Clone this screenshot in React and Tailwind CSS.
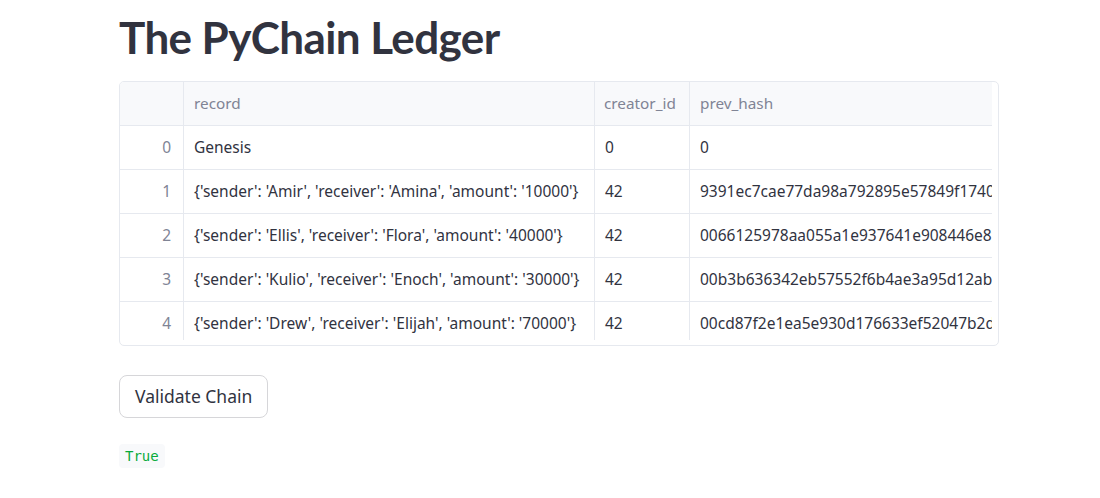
import React from "react";

const rows = [
  {
    record: "Genesis",
    creator: "0",
    hash: "0",
  },
  {
    record: "{'sender': 'Amir', 'receiver': 'Amina', 'amount': '10000'}",
    creator: "42",
    hash: "9391ec7cae77da98a792895e57849f1740a",
  },
  {
    record: "{'sender': 'Ellis', 'receiver': 'Flora', 'amount': '40000'}",
    creator: "42",
    hash: "0066125978aa055a1e937641e908446e89c",
  },
  {
    record: "{'sender': 'Kulio', 'receiver': 'Enoch', 'amount': '30000'}",
    creator: "42",
    hash: "00b3b636342eb57552f6b4ae3a95d12abc9",
  },
  {
    record: "{'sender': 'Drew', 'receiver': 'Elijah', 'amount': '70000'}",
    creator: "42",
    hash: "00cd87f2e1ea5e930d176633ef52047b2d9",
  },
];

const App = () => {
  return (
    <div
      className="bg-white text-[#31333f] w-[1100px] h-[498px] overflow-hidden"
      style={{ fontFamily: "'Noto Sans', sans-serif" }}
    >
      <main className="w-[880px] ml-[119px] pt-[9px]">
        <h1
          className="text-[44px] font-bold leading-[56px] tracking-[-0.6px] text-[#31333f]"
          style={{ fontFamily: "Lato, 'Noto Sans', sans-serif" }}
        >
          The PyChain Ledger
        </h1>

        <div className="mt-[16px] w-[880px] border border-[#e6e9ef] rounded-[5px] overflow-hidden pb-[5px]">
          <div className="w-[872px] h-[258px] overflow-hidden">
            <div className="flex h-[44px] bg-[#f8f9fb] border-b border-[#e6e9ef] text-[15.3px] text-[#808495]">
              <div className="w-[64px] shrink-0 border-r border-[#e6e9ef]" />
              <div className="w-[411px] shrink-0 border-r border-[#e6e9ef] flex items-center px-[10px]">
                record
              </div>
              <div className="w-[95px] shrink-0 border-r border-[#e6e9ef] flex items-center px-[9px] whitespace-nowrap">
                creator_id
              </div>
              <div className="w-[400px] shrink-0 flex items-center px-[10px]">
                prev_hash
              </div>
            </div>
            {rows.map((row, i) => (
              <div
                key={i}
                className="flex h-[44px] border-b border-[#e6e9ef] text-[15.5px]"
              >
                <div className="w-[64px] shrink-0 border-r border-[#e6e9ef] flex items-center justify-end pr-[12px] text-[#808495]">
                  {i}
                </div>
                <div className="w-[411px] shrink-0 border-r border-[#e6e9ef] flex items-center px-[10px] whitespace-nowrap overflow-hidden">
                  {row.record}
                </div>
                <div className="w-[95px] shrink-0 border-r border-[#e6e9ef] flex items-center px-[10px]">
                  {row.creator}
                </div>
                <div className="w-[400px] shrink-0 flex items-center px-[10px] whitespace-nowrap overflow-hidden">
                  {row.hash}
                </div>
              </div>
            ))}
          </div>
        </div>

        <button className="mt-[29px] h-[43px] px-[15px] border border-[#d6d6d9] rounded-[8px] bg-white text-[17.5px] text-[#31333f]">
          Validate Chain
        </button>

        <div className="mt-[25px]">
          <span
            className="inline-block bg-[#f8f9fb] rounded-[4px] px-[6px] h-[24px] leading-[24px] text-[14px] text-[#09ab3b]"
            style={{ fontFamily: "'DejaVu Sans Mono', monospace" }}
          >
            True
          </span>
        </div>
      </main>
    </div>
  );
};

export default App;
